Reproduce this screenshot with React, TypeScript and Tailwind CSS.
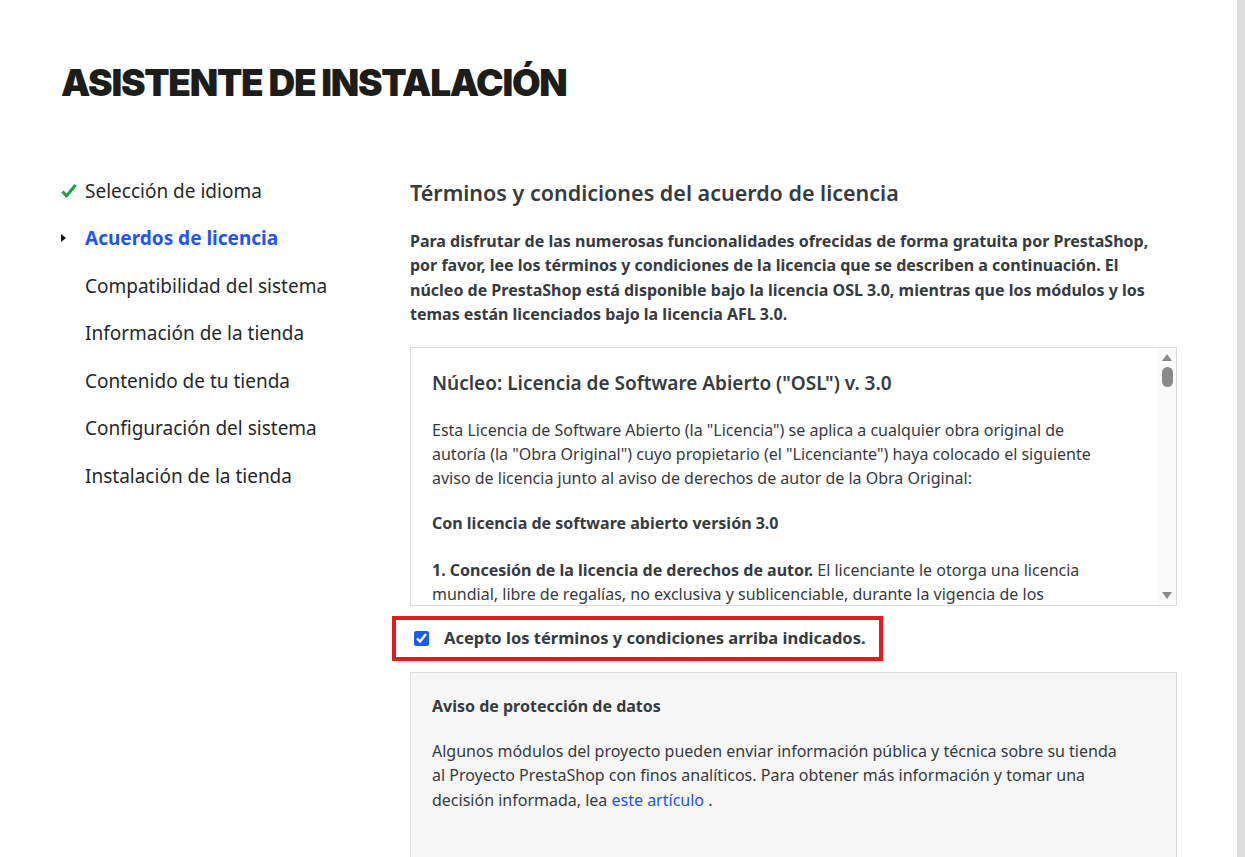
const steps = [
  { label: 'Selección de idioma', state: 'done' },
  { label: 'Acuerdos de licencia', state: 'active' },
  { label: 'Compatibilidad del sistema', state: 'todo' },
  { label: 'Información de la tienda', state: 'todo' },
  { label: 'Contenido de tu tienda', state: 'todo' },
  { label: 'Configuración del sistema', state: 'todo' },
  { label: 'Instalación de la tienda', state: 'todo' },
];

export default function App() {
  return (
    <div className="flex h-[857px] overflow-hidden bg-white text-[#363a41] font-['Noto_Sans',sans-serif]">
      <div className="flex-1 pl-[61px] pt-[61px]">
        <h1 className="font-['Inter',sans-serif] text-[37px] font-black leading-[44px] tracking-[-0.035em] text-[#1d1d1b]">
          ASISTENTE DE INSTALACIÓN
        </h1>

        <div className="mt-[73px] flex">
          {/* Steps */}
          <nav className="-mt-[11px] w-[349px] shrink-0">
            {steps.map((step) => (
              <div key={step.label} className="flex h-[47.5px] items-center">
                <span className="flex w-6 items-center">
                  {step.state === 'done' && (
                    <svg width="16" height="16" viewBox="0 0 16 16">
                      <path d="M1.5 8.5 L5.5 13 L14.5 2" fill="none" stroke="#1f9d48" strokeWidth="3" strokeLinejoin="round" />
                    </svg>
                  )}
                  {step.state === 'active' && (
                    <svg width="6" height="10" viewBox="0 0 6 10">
                      <path d="M0 1 L5 5 L0 9 Z" fill="#111" />
                    </svg>
                  )}
                </span>
                <span
                  className={
                    step.state === 'active'
                      ? 'text-[19px] font-bold text-[#1f54f5]'
                      : 'text-[19px] text-[#25282b]'
                  }
                >
                  {step.label}
                </span>
              </div>
            ))}
          </nav>

          {/* Content */}
          <div className="w-[767px] shrink-0">
            <h2 className="text-[21.5px] font-semibold leading-[30px] text-[#363a41]">
              Términos y condiciones del acuerdo de licencia
            </h2>
            <p className="mt-[21px] whitespace-nowrap text-[16px] font-bold leading-[24.4px]">
              Para disfrutar de las numerosas funcionalidades ofrecidas de forma gratuita por PrestaShop,
              <br />
              por favor, lee los términos y condiciones de la licencia que se describen a continuación. El
              <br />
              núcleo de PrestaShop está disponible bajo la licencia OSL 3.0, mientras que los módulos y los
              <br />
              temas están licenciados bajo la licencia AFL 3.0.
            </p>

            <div className="mt-[20px] flex h-[259px] border border-[#dddddd]">
              <div className="flex-1 overflow-hidden whitespace-nowrap pl-[21px] pr-4 pt-[22px]">
                <h3 className="text-[19px] font-semibold leading-[26px]">Núcleo: Licencia de Software Abierto ("OSL") v. 3.0</h3>
                <p className="mt-[22px] text-[16px] leading-[24px]">
                  Esta Licencia de Software Abierto (la "Licencia") se aplica a cualquier obra original de
                  <br />
                  autoría (la "Obra Original") cuyo propietario (el "Licenciante") haya colocado el siguiente
                  <br />
                  aviso de licencia junto al aviso de derechos de autor de la Obra Original:
                </p>
                <p className="mt-[21px] text-[16px] font-bold leading-[24px]">Con licencia de software abierto versión 3.0</p>
                <p className="mt-[23px] text-[16px] leading-[24px]">
                  <b>1. Concesión de la licencia de derechos de autor.</b> El licenciante le otorga una licencia
                  <br />
                  mundial, libre de regalías, no exclusiva y sublicenciable, durante la vigencia de los
                </p>
              </div>
              {/* scrollbar */}
              <div className="flex w-[18px] shrink-0 flex-col items-center bg-[#fafafa] py-[6px]">
                <svg width="10" height="7" viewBox="0 0 10 7">
                  <path d="M5 0 L10 7 L0 7 Z" fill="#8a8a8a" />
                </svg>
                <div className="mt-[6px] h-[20px] w-[11px] rounded-full bg-[#8a8a8a]" />
                <div className="flex-1" />
                <svg width="10" height="7" viewBox="0 0 10 7">
                  <path d="M0 0 L10 0 L5 7 Z" fill="#8a8a8a" />
                </svg>
              </div>
            </div>

            <label className="-ml-[18px] mt-[10px] flex h-[45px] w-[491px] items-center border-4 border-[#e31b1e] pl-[18px]">
              <input type="checkbox" defaultChecked className="h-[15px] w-[15px] accent-[#1a5cf0]" />
              <span className="ml-[15px] text-[16.5px] font-bold text-[#363a41]">Acepto los términos y condiciones arriba indicados.</span>
            </label>

            <div className="mt-[11px] h-[200px] border border-[#dddddd] bg-[#f6f6f6] pl-[21px] pr-4 pt-[20px]">
              <h4 className="text-[16px] font-bold leading-[26px]">Aviso de protección de datos</h4>
              <p className="mt-[20px] whitespace-nowrap text-[16px] leading-[24.5px]">
                Algunos módulos del proyecto pueden enviar información pública y técnica sobre su tienda
                <br />
                al Proyecto PrestaShop con finos analíticos. Para obtener más información y tomar una
                <br />
                decisión informada, lea <a className="text-[#1f54f5]">este artículo</a> .
              </p>
            </div>
          </div>
        </div>
      </div>
      <div className="w-2 shrink-0 bg-[#dedede]" />
    </div>
  );
}
